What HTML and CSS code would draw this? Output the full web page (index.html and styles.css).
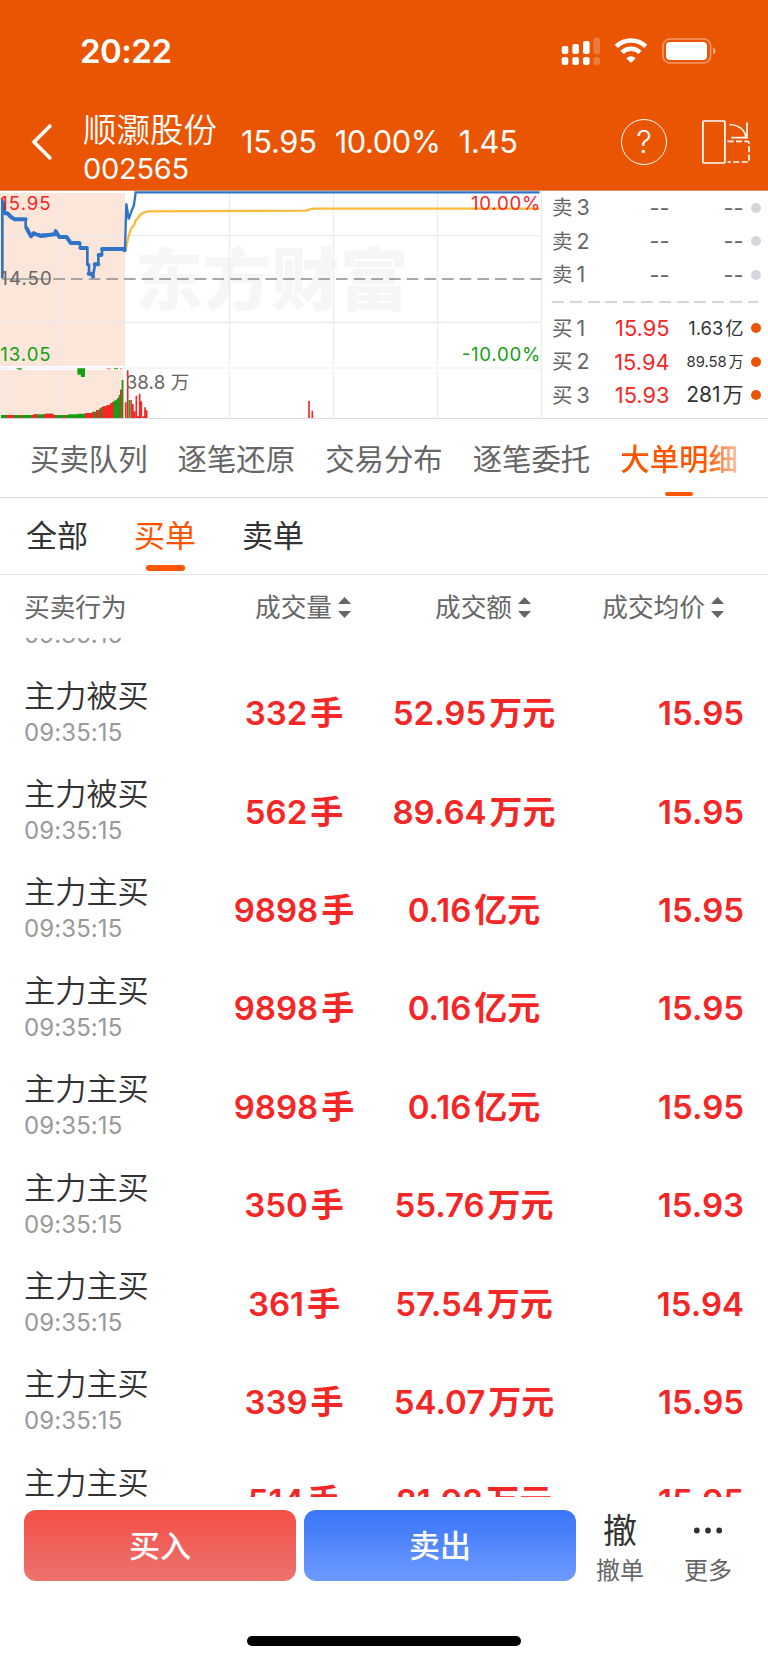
FILE: index.html
```html
<!DOCTYPE html>
<html lang="zh-CN">
  <head>
    <meta charset="UTF-8" />
    <title>顺灏股份 002565</title>
    <meta name="viewport" content="width=device-width, initial-scale=1.0" />
    <link rel="stylesheet" href="styles.css">
  </head>
  <body>
    <header class="header">
      <div class="status-bar">
        <span class="clock">20:22</span>
        <svg class="status-icons" width="156" height="30" viewBox="0 0 156 30">
          <g fill="#fff">
            <rect x="1.7" y="10" width="6.6" height="8" rx="2" />
            <rect x="12.3" y="8" width="6.6" height="10" rx="2" />
            <rect x="23" y="5" width="6.6" height="13" rx="2" />
            <rect x="1.7" y="21" width="6.6" height="8" rx="2.5" />
            <rect x="12.3" y="21" width="6.6" height="8" rx="2.5" />
            <rect x="23" y="21" width="6.6" height="8" rx="2.5" />
          </g>
          <g fill="#fff" opacity="0.22">
            <rect x="33.4" y="1.6" width="6.6" height="16.6" rx="2" />
            <rect x="33.4" y="21" width="6.6" height="8" rx="2.5" />
          </g>
          <g fill="none" stroke="#fff" stroke-width="4.6">
            <path d="M56.3 10.3a21.4 21.4 0 0 1 29.4 0" />
            <path d="M62 16.3a13 13 0 0 1 18 0" />
          </g>
          <path d="M71 27l-4.7-4.8a6.8 6.8 0 0 1 9.4 0z" fill="#fff" />
          <rect x="103" y="3" width="47.6" height="24" rx="7" fill="none" stroke="#fff" stroke-opacity="0.4" stroke-width="1.6" />
          <rect x="106" y="6" width="41" height="18" rx="4" fill="#fff" />
          <path d="M153 11.5c3.4 1.5 3.4 5.500 0 7z" fill="#fff" fill-opacity="0.5" />
        </svg>
      </div>
      <div class="nav">
        <svg class="back" width="22" height="38" viewBox="0 0 22 38">
          <path d="M21 2L4 19L21 36" fill="none" stroke="#fff" stroke-width="3.6" />
        </svg>
        <div class="stock">
          <div class="stock-name">顺灏股份</div>
          <div class="stock-code">002565</div>
        </div>
        <div class="quote">
          <span class="q-price">15.95</span>
          <span class="q-rate">10.00%</span>
          <span class="q-diff">1.45</span>
        </div>
        <div class="help">?</div>
        <svg class="rotate" width="50" height="46" viewBox="0 0 50 46" fill="none" stroke="#fff" stroke-width="1.7">
          <rect x="1.900" y="2" width="22" height="42" rx="1" />
          <path d="M28.500 5.500C38 6 44 11 45 19M46 3.500V18.700H30.500" />
          <path d="M26.500 22.300H46.500Q48 22.300 48 24V43H26.500" stroke-dasharray="6 2.500" />
        </svg>
      </div>
    </header>

    <section class="market">
      <svg class="chart" width="543" height="227" viewBox="0 18 1629 681">
        <rect x="0" y="24" width="375" height="519" fill="#fce6da" />
        <rect x="3" y="555" width="367" height="144" fill="#fce6da" />
        <text class="watermark" x="404" y="361">东方财富</text>
        <!-- grid -->
        <g stroke="#e9ebf1" stroke-width="3.500" fill="none">
          <path d="M0 152H1625M0 412H1625M0 549H1625" />
          <path d="M188 24V543M688 24V543M1000 24V543M1312 24V543" />
          <path d="M188 555V699M688 555V699M1000 555V699M1312 555V699" />
          <path d="M1624 18V699M1.500 549V699" />
        </g>
        <path d="M160 282H1625" stroke="#8c8c8c" stroke-width="4" stroke-dasharray="35 18" fill="none" />
        <path d="M6 282H150" stroke="#999" stroke-width="4" />
        <!-- average price -->
        <path d="M378 190L384 160L390 140L395 128L403 119L407 106L413 102L419 91L425 86L435 81L445 79L920 77L928 73L940 71H1619" fill="none" stroke="#fdba3c" stroke-width="7" />
        <!-- price -->
        <path d="M7 280V45L13 65L15 85H22L28 94L36 98L44 103H77V126L84 140L93 154L101 143L107 148H118L122 154L128 148L134 153L140 148H164L167 137L174 149L178 156H200L212 174H240V189H262V239H267V266H279V274L285 238H295V210H306V192H374" fill="none" stroke="#2f74c8" stroke-width="8" stroke-linejoin="round" />
        <path d="M15 85H22L36 98L44 103H77M80 130L93 154L101 145L122 153L164 148L167 139L178 156H200L212 174H238M242 189H260M266 266H274L279 274M284 238H295M296 210H304M306 192H374V196" fill="none" stroke="#2f74c8" stroke-width="12" stroke-linecap="round" stroke-linejoin="round" />
        <path d="M375 192L379 55L386 103L392 85L402 60L407 22H1619" fill="none" stroke="#2f74c8" stroke-width="7" />
        <!-- volume -->
        <clipPath id="volume">
          <path d="M3 699V690H100V688H135V686H160V690H205V688H235V686H256V684H277V680H288V676H298V670H304V666H309V664H320V660H330V655H336V651H341V647H346V644H351V639H356V630H360V614H365V585H371V699Z" />
        </clipPath>
        <g clip-path="url(#volume)">
          <rect x="0" y="550" width="375" height="149" fill="#14a014" />
          <path d="M20 560H42V699H20ZM60 560H66V699H60ZM95 560H112V699H95ZM130 560H166V699H130ZM190 560H196V699H190ZM255 560H282V699H255ZM288 560H298V699H288ZM304 560H341V699H304ZM359 560H364V699H359Z" fill="#f52626" />
        </g>
        <path d="M377 699V652M383 699V556M393.500 699V645M398.500 699V657M403.500 699V679M409 699V632M414 699V694M419 699V626M424 699V649M430 699V694M435 699V667M440 699V676M927 699V648M937 699V677" stroke="#f52626" stroke-width="5" />
        <path d="M388 699V645" stroke="#14a014" stroke-width="5" />
        <path d="M47 550H65V554H56ZM232 550H255V576H243V569H232ZM342 550H354V553H342Z" fill="#14a014" />
        <path d="M320 550H332V553H320ZM359 550H366V553H359Z" fill="#f57070" />
        <text class="axis up" x="1" y="74" textLength="151">15.95</text>
        <text class="axis" x="1" y="300" textLength="154">14.50</text>
        <text class="axis down" x="1" y="528" textLength="151">13.05</text>
        <text class="axis up" x="1413" y="74" textLength="208">10.00%</text>
        <text class="axis down" x="1385" y="528" textLength="236">-10.00%</text>
        <text class="axis" x="377" y="612" textLength="191">38.8 万</text>
      </svg>
      <div class="depth">
        <div class="level"><span class="side">卖<b>3</b></span><span class="dash">--</span><span class="vol dash">--</span><i class="dot"></i></div>
        <div class="level"><span class="side">卖<b>2</b></span><span class="dash">--</span><span class="vol dash">--</span><i class="dot"></i></div>
        <div class="level"><span class="side">卖<b>1</b></span><span class="dash">--</span><span class="vol dash">--</span><i class="dot"></i></div>
        <div class="divider"></div>
        <div class="level"><span class="side">买<b>1</b></span><span class="bid">15.95</span><span class="vol vol-m">1.63<em>亿</em></span><i class="dot on"></i></div>
        <div class="level"><span class="side">买<b>2</b></span><span class="bid">15.94</span><span class="vol vol-s">89.58<em>万</em></span><i class="dot on"></i></div>
        <div class="level"><span class="side">买<b>3</b></span><span class="bid">15.93</span><span class="vol vol-l">281<em>万</em></span><i class="dot on"></i></div>
      </div>
    </section>

    <nav class="tabs">
      <span class="tab">买卖队列</span>
      <span class="tab">逐笔还原</span>
      <span class="tab">交易分布</span>
      <span class="tab">逐笔委托</span>
      <span class="tab active">大单明细</span>
    </nav>

    <nav class="filters">
      <span class="filter">全部</span>
      <span class="filter active">买单</span>
      <span class="filter">卖单</span>
    </nav>

    <div class="table-head">
      <span>买卖行为</span>
      <span class="th-qty">成交量<i class="sort"></i></span>
      <span class="th-amount">成交额<i class="sort"></i></span>
      <span class="th-price">成交均价<i class="sort"></i></span>
    </div>

    <main class="list">
      <div class="row first">
        <div class="time">09:35:15</div>
      </div>
      <div class="row">
        <div class="action"><div class="name">主力被买</div><div class="time">09:35:15</div></div>
        <div class="num">332<em>手</em></div><div class="num">52.95<em>万元</em></div><div class="num price">15.95</div>
      </div>
      <div class="row">
        <div class="action"><div class="name">主力被买</div><div class="time">09:35:15</div></div>
        <div class="num">562<em>手</em></div><div class="num">89.64<em>万元</em></div><div class="num price">15.95</div>
      </div>
      <div class="row">
        <div class="action"><div class="name">主力主买</div><div class="time">09:35:15</div></div>
        <div class="num">9898<em>手</em></div><div class="num">0.16<em>亿元</em></div><div class="num price">15.95</div>
      </div>
      <div class="row">
        <div class="action"><div class="name">主力主买</div><div class="time">09:35:15</div></div>
        <div class="num">9898<em>手</em></div><div class="num">0.16<em>亿元</em></div><div class="num price">15.95</div>
      </div>
      <div class="row">
        <div class="action"><div class="name">主力主买</div><div class="time">09:35:15</div></div>
        <div class="num">9898<em>手</em></div><div class="num">0.16<em>亿元</em></div><div class="num price">15.95</div>
      </div>
      <div class="row">
        <div class="action"><div class="name">主力主买</div><div class="time">09:35:15</div></div>
        <div class="num">350<em>手</em></div><div class="num">55.76<em>万元</em></div><div class="num price">15.93</div>
      </div>
      <div class="row">
        <div class="action"><div class="name">主力主买</div><div class="time">09:35:15</div></div>
        <div class="num">361<em>手</em></div><div class="num">57.54<em>万元</em></div><div class="num price">15.94</div>
      </div>
      <div class="row">
        <div class="action"><div class="name">主力主买</div><div class="time">09:35:15</div></div>
        <div class="num">339<em>手</em></div><div class="num">54.07<em>万元</em></div><div class="num price">15.95</div>
      </div>
      <div class="row">
        <div class="action"><div class="name">主力主买</div></div>
        <div class="num">514<em>手</em></div><div class="num">81.98<em>万元</em></div><div class="num price">15.95</div>
      </div>
    </main>

    <footer class="footer">
      <div class="actions">
        <button class="button buy">买入</button>
        <button class="button sell">卖出</button>
        <div class="tool">
          <span class="tool-icon">撤</span>
          <span class="tool-label">撤单</span>
        </div>
        <div class="tool more">
          <svg class="tool-icon" width="30" height="36" viewBox="0 0 30 36" fill="#333">
            <circle cx="3.800" cy="18" r="2.900" />
            <circle cx="15" cy="18" r="2.900" />
            <circle cx="26.200" cy="18" r="2.900" />
          </svg>
          <span class="tool-label">更多</span>
        </div>
      </div>
      <div class="home-bar"></div>
    </footer>
  </body>
</html>
```
FILE: styles.css
```css
body {
  width: 768px;
  height: 1663px;
  margin: 0;
  overflow: hidden;
  display: flex;
  flex-direction: column;
  background: #fff;
  color: #333;
  font-family: Inter, "Noto Sans CJK SC", sans-serif;
}
* {
  box-sizing: border-box;
}
b,
i,
em {
  font-style: normal;
  font-weight: inherit;
}

/* header */
.header {
  height: 191px;
  flex: none;
  background: #ea5504;
  color: #fff;
  border-bottom: 1px solid #d98a5c;
}
.status-bar {
  height: 94px;
  padding: 36px 52px 0 80px;
  display: flex;
  justify-content: space-between;
  align-items: flex-start;
}
.clock {
  font-size: 33px;
  font-weight: 600;
  line-height: 31px;
  letter-spacing: -0.5px;
}
.nav {
  height: 95px;
  display: flex;
  align-items: center;
  padding: 0 17px 0 30px;
}
.stock {
  width: 158px;
  margin-left: 31px;
  padding-top: 14px;
}
.stock-name {
  font-size: 33.5px;
  font-weight: 350;
  line-height: 40px;
}
.stock-code {
  font-size: 29px;
  line-height: 38px;
  letter-spacing: -0.3px;
}
.quote {
  flex: 1;
  display: flex;
  gap: 18px;
  font-size: 30.8px;
  letter-spacing: -0.25px;
}
.q-rate {
  letter-spacing: -0.4px;
}
.help {
  width: 46px;
  height: 46px;
  border: 1.6px solid #fff;
  border-radius: 50%;
  font-size: 31px;
  font-weight: 300;
  line-height: 43px;
  text-align: center;
  margin-right: 34px;
}

/* intraday chart and order book */
.market {
  height: 228px;
  flex: none;
  display: flex;
  border-bottom: 1px solid #d7d9e2;
}
.chart {
  display: block;
  flex: none;
}
.watermark {
  font-size: 205px;
  font-weight: 900;
  fill: #f6f6f6;
}
.axis {
  font-size: 56px;
  fill: #666;
}
.axis.up {
  fill: #f52626;
}
.axis.down {
  fill: #14a014;
}
.depth {
  flex: 1;
  padding: 0 8px 0 9px;
}
.level {
  height: 33.5px;
  display: grid;
  grid-template-columns: 50px 67.500px 74px 1fr;
  align-items: center;
  text-align: right;
  font-size: 21.8px;
  line-height: 30px;
}
.level em {
  margin-left: 2px;
  line-height: 0;
}
.side {
  color: #666;
  text-align: left;
  font-size: 20.5px;
}
.side b {
  font-size: 21.5px;
  margin-left: 4px;
}
.dash {
  color: #666;
}
.bid {
  color: #f52626;
}
.vol-l {
  font-size: 21px;
}
.vol-m {
  font-size: 18.3px;
}
.vol-s {
  font-size: 14.8px;
}
.dot {
  width: 10px;
  height: 10px;
  margin-left: 7px;
  border-radius: 50%;
  background: #d3d6dc;
}
.dot.on {
  background: #ea5504;
}
.divider {
  height: 2px;
  margin: 9px 3px 9px 0;
  background: repeating-linear-gradient(90deg, #d3d6dc 0 12px, transparent 12px 17.8px);
}

/* tabs */
.tabs {
  height: 79px;
  flex: none;
  display: flex;
  gap: 30px;
  padding-left: 30px;
  border-bottom: 1px solid #d7d9e2;
}
.tab {
  position: relative;
  font-size: 29.4px;
  line-height: 82px;
  color: #666;
  white-space: nowrap;
}
.tab.active {
  font-weight: 500;
  color: transparent;
  background: linear-gradient(90deg, #ff5500 72%, #ffc0a0 100%);
  -webkit-background-clip: text;
  background-clip: text;
}
.active::after {
  content: "";
  position: absolute;
  left: 50%;
  bottom: 1px;
  width: 28px;
  height: 4px;
  margin-left: -14px;
  border-radius: 2px;
  background: #ff5500;
}
.filters {
  height: 77px;
  flex: none;
  display: flex;
  gap: 46px;
  padding-left: 26px;
  border-bottom: 1px solid #e6e7ea;
}
.filter {
  position: relative;
  font-size: 31px;
  line-height: 76px;
}
.filter.active {
  color: #ff5500;
}
.filter.active::after {
  width: 39px;
  height: 6px;
  bottom: 3px;
  margin-left: -19px;
  border-radius: 3px;
}

/* big order list */
.table-head {
  height: 63px;
  flex: none;
  display: grid;
  grid-template-columns: 180px 198px 162px 1fr;
  padding: 0 44px 0 24px;
  font-size: 25.7px;
  line-height: 65px;
  color: #666;
}
.th-qty,
.th-amount {
  text-align: center;
}
.th-price {
  text-align: right;
}
.sort {
  display: inline-block;
  width: 13px;
  height: 21px;
  margin-left: 6px;
  vertical-align: -1px;
  background: #666;
  clip-path: polygon(50% 0, 100% 33%, 0 33%, 0 67%, 100% 67%, 50% 100%, 0 67%, 0 33%);
}
.list {
  height: 859px;
  flex: none;
  overflow: hidden;
}
.row {
  height: 98.4px;
  display: grid;
  grid-template-columns: 180px 180px 180px 1fr;
  align-items: center;
  padding: 0 24px;
}
.row.first {
  height: 25px;
  align-items: start;
}
.row.first .time {
  margin-top: -20.5px;
}
.row:last-child {
  align-items: start;
  padding-top: 13px;
}
.row:last-child .num {
  padding-top: 18px;
}
.name {
  font-size: 31.2px;
  font-weight: 350;
  line-height: 40px;
}
.time {
  font-size: 24px;
  line-height: 33px;
  letter-spacing: 0.1px;
  color: #999;
}
.num {
  padding-top: 2px;
  font-size: 33px;
  font-weight: 600;
  line-height: 40px;
  color: #f52626;
  text-align: center;
  white-space: nowrap;
}
.num em {
  margin-left: 3px;
  line-height: 0;
}
.num.price {
  text-align: right;
}

/* footer */
.footer {
  flex: 1;
  padding-top: 13px;
}
.actions {
  height: 126px;
  display: flex;
  align-items: flex-start;
  padding-left: 24px;
}
.button {
  width: 272px;
  height: 71px;
  margin: 0 8px 0 0;
  padding: 0 0 4px;
  border: none;
  border-radius: 12px;
  color: #fff;
  font-family: inherit;
  font-size: 31px;
  font-weight: 500;
}
.buy {
  background: linear-gradient(#f44f49, #ec736d);
}
.sell {
  background: linear-gradient(#3875f8, #6e9aff);
}
.tool {
  width: 72px;
  display: flex;
  flex-direction: column;
  align-items: center;
}
.more {
  margin-left: 16px;
}
.tool-icon {
  font-size: 34px;
  line-height: 42px;
  height: 41px;
}
.tool-label {
  font-size: 24px;
  line-height: 40px;
  color: #666;
}
.home-bar {
  width: 274px;
  height: 10px;
  margin: 0 auto;
  border-radius: 5px;
  background: #000;
}
```
